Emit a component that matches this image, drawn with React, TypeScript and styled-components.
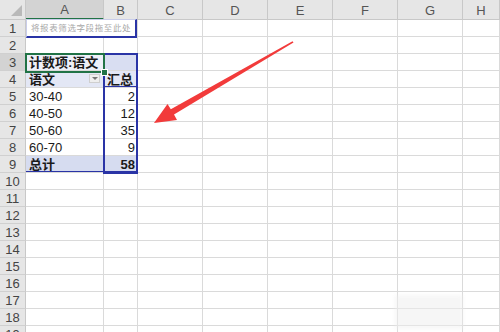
import React from "react";
import styled, { createGlobalStyle } from "styled-components";

const Global = createGlobalStyle`
  html, body { margin: 0; padding: 0; background: #fff; overflow: hidden; }
  body { font-family: "Liberation Sans", "Noto Sans CJK SC", sans-serif; }
`;

const Page = styled.div`
  position: relative;
  width: 500px;
  height: 332px;
  overflow: hidden;
`;

const Sheet = styled.div`
  display: grid;
  grid-template-columns: 26px 78px 34px 65px 65px 65px 65px 65px 1fr;
  grid-template-rows: 20px repeat(19, 17px);
`;

const Corner = styled.div`
  position: relative;
  background: #e6e6e6;
  border-right: 1px solid #c8c8c8;
  border-bottom: 1px solid #c8c8c8;
  box-sizing: border-box;
  &::after {
    content: "";
    position: absolute;
    right: 3px;
    bottom: 3px;
    width: 0;
    height: 0;
    border-left: 11px solid transparent;
    border-bottom: 11px solid #b9b9b9;
  }
`;

const ColHead = styled.div<{ $sel?: boolean }>`
  box-sizing: border-box;
  background: ${(p) => (p.$sel ? "#d3d3d3" : "#e6e6e6")};
  border-right: 1px solid #c8c8c8;
  border-bottom: ${(p) => (p.$sel ? "2px solid #217346" : "1px solid #c8c8c8")};
  color: #555;
  font-size: 13px;
  display: flex;
  align-items: center;
  justify-content: center;
  padding-top: 1px;
`;

const RowHead = styled.div<{ $sel?: boolean }>`
  box-sizing: border-box;
  background: ${(p) => (p.$sel ? "#d3d3d3" : "#e6e6e6")};
  border-right: 1px solid #c8c8c8;
  border-bottom: 1px solid #d0d0d0;
  color: #444;
  font-size: 13px;
  display: flex;
  align-items: center;
  justify-content: center;
`;

const Cell = styled.div<{
  $bg?: string;
  $align?: "left" | "right";
  $bold?: boolean;
  $span?: number;
  $blueBottom?: boolean;
}>`
  position: relative;
  box-sizing: border-box;
  grid-column: span ${(p) => p.$span || 1};
  background: ${(p) => p.$bg || "#fff"};
  border-right: 1px solid #dadada;
  border-bottom: 1px solid #dadada;
  box-shadow: ${(p) => (p.$blueBottom ? "inset 0 -1px 0 #2a34a6, 0 1px 0 #2a34a6" : "none")};
  font-size: 13px;
  font-weight: ${(p) => (p.$bold ? 700 : 400)};
  color: #1a1a1a;
  display: flex;
  align-items: center;
  justify-content: ${(p) => (p.$align === "right" ? "flex-end" : "flex-start")};
  padding: ${(p) => (p.$align === "right" ? "0 2px 0 0" : "0 0 0 3px")};
  white-space: nowrap;
  line-height: 1;
`;

const FilterHint = styled.span`
  font-size: 8.5px;
  color: #a8a8a8;
  letter-spacing: 0.6px;
  padding-left: 2px;
`;

const DropBtn = styled.span`
  position: absolute;
  right: 3px;
  top: 3px;
  width: 11px;
  height: 9px;
  background: #eeeeee;
  border: 1px solid #cfcfcf;
  box-sizing: border-box;
  &::after {
    content: "";
    position: absolute;
    left: 2px;
    top: 2px;
    border-left: 3px solid transparent;
    border-right: 3px solid transparent;
    border-top: 3px solid #777;
  }
`;

const Frame = styled.div<{ $x: number; $y: number; $w: number; $h: number; $color: string }>`
  position: absolute;
  left: ${(p) => p.$x}px;
  top: ${(p) => p.$y}px;
  width: ${(p) => p.$w}px;
  height: ${(p) => p.$h}px;
  box-sizing: border-box;
  border: 2px solid ${(p) => p.$color};
  pointer-events: none;
`;

const FilterBox = styled.div`
  position: absolute;
  left: 26px;
  top: 19px;
  width: 111px;
  height: 19px;
  box-sizing: border-box;
  border-top: 1px solid #c9cdea;
  border-left: 1px solid #c9cdea;
  border-right: 2px solid #2a34a6;
  border-bottom: 2px solid #2a34a6;
  pointer-events: none;
`;

const Handle = styled.div`
  position: absolute;
  left: 101px;
  top: 69px;
  width: 5px;
  height: 5px;
  background: #217346;
  border: 1px solid #fff;
`;

const Arrow = styled.svg`
  position: absolute;
  left: 0;
  top: 0;
  pointer-events: none;
`;

const Watermark = styled.div`
  position: absolute;
  left: 395px;
  top: 295px;
  width: 68px;
  height: 34px;
  background: rgba(238, 238, 238, 0.55);
  filter: blur(2px);
  pointer-events: none;
`;

const cols = ["A", "B", "C", "D", "E", "F", "G", "H"];

type CellDef = {
  text?: React.ReactNode;
  bg?: string;
  align?: "left" | "right";
  bold?: boolean;
  drop?: boolean;
  span?: number;
  skip?: boolean;
  blueBottom?: boolean;
};

const data: Record<string, CellDef> = {
  A1: { text: <FilterHint>将报表筛选字段拖至此处</FilterHint>, span: 2 },
  B1: { skip: true },
  A3: { text: "计数项:语文", bold: true, bg: "#eef0f8" },
  B3: { bg: "#d9def2" },
  A4: { text: "语文", bold: true, bg: "#e3e7f5", drop: true },
  B4: { text: "汇总", bold: true, bg: "#e3e7f5", align: "left", blueBottom: true },
  A5: { text: "30-40" },
  B5: { text: "2", align: "right" },
  A6: { text: "40-50" },
  B6: { text: "12", align: "right" },
  A7: { text: "50-60" },
  B7: { text: "35", align: "right" },
  A8: { text: "60-70" },
  B8: { text: "9", align: "right" },
  A9: { text: "总计", bold: true, bg: "#d6dcf0", blueBottom: true },
  B9: { text: "58", bold: true, bg: "#d6dcf0", align: "right", blueBottom: true },
};

export default function App() {
  const rows = Array.from({ length: 19 }, (_, i) => i + 1);
  return (
    <>
      <Global />
      <Page>
        <Sheet>
          <Corner />
          {cols.map((c) => (
            <ColHead key={c} $sel={c === "A"}>
              {c}
            </ColHead>
          ))}
          {rows.map((r) => (
            <React.Fragment key={r}>
              <RowHead $sel={r === 3}>{r}</RowHead>
              {cols.map((c) => {
                const id = `${c}${r}`;
                const d = data[id] || {};
                if (d.skip) return null;
                return (
                  <Cell
                    key={id}
                    $bg={d.bg}
                    $align={d.align}
                    $bold={d.bold}
                    $span={d.span}
                    $blueBottom={d.blueBottom}
                  >
                    {d.text}
                    {d.drop && <DropBtn />}
                  </Cell>
                );
              })}
            </React.Fragment>
          ))}
        </Sheet>
        <FilterBox />
        <Frame $x={103} $y={53} $w={35} $h={121} $color="#2a34a6" />
        <Frame $x={25} $y={53} $w={80} $h={20} $color="#217346" />
        <Handle />
        <Watermark />
        <Arrow width="500" height="332" viewBox="0 0 500 332">
          <polygon
            points="154,123 177,120 174,114.5 293.5,42.5 292.5,41.3 170.8,109.2 167.5,104"
            fill="#f23b3b"
          />
        </Arrow>
      </Page>
    </>
  );
}
